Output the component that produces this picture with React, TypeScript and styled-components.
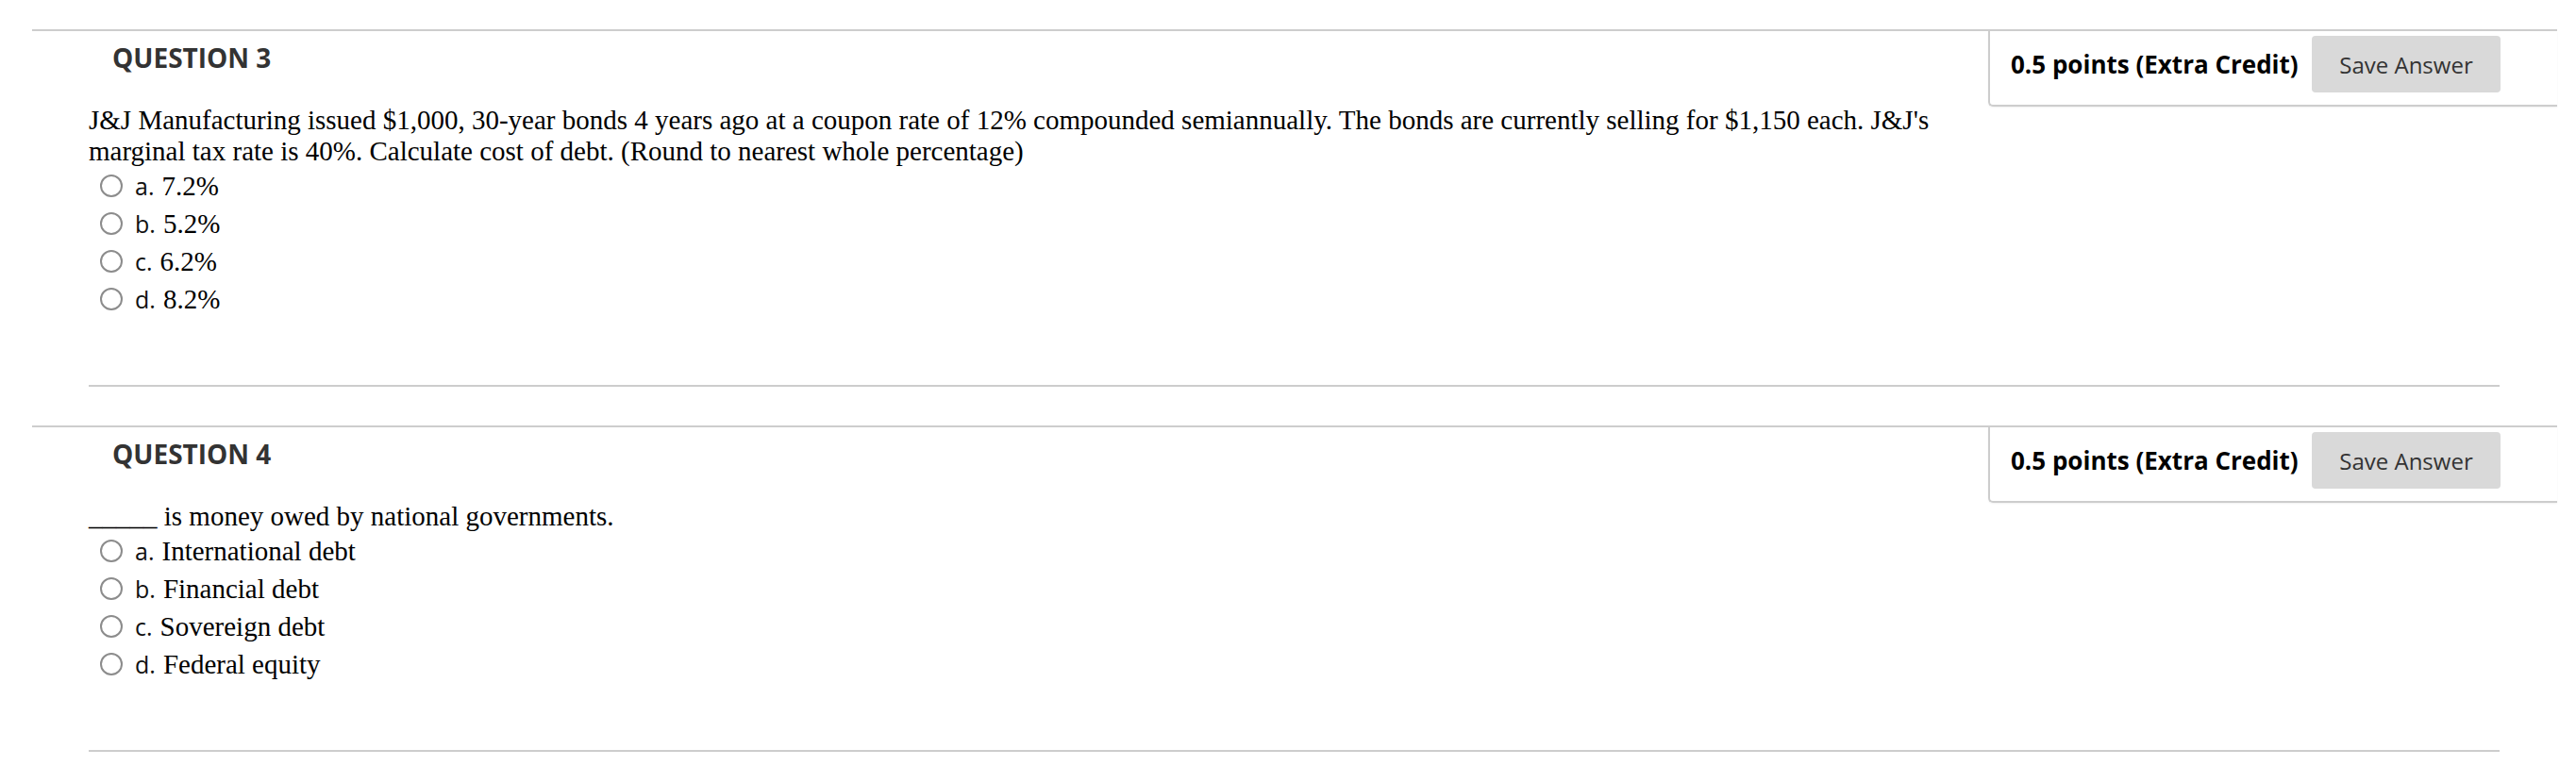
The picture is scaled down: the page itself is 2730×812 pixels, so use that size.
import styled, { createGlobalStyle } from 'styled-components'

interface Question {
  number: number
  points: string
  prompt: string
  options: { key: string; text: string }[]
}

const questions: Question[] = [
  {
    number: 3,
    points: '0.5 points (Extra Credit)',
    prompt:
      "J&J Manufacturing issued $1,000, 30-year bonds 4 years ago at a coupon rate of 12% compounded semiannually. The bonds are currently selling for $1,150 each. J&J's marginal tax rate is 40%. Calculate cost of debt. (Round to nearest whole percentage)",
    options: [
      { key: 'a.', text: '7.2%' },
      { key: 'b.', text: '5.2%' },
      { key: 'c.', text: '6.2%' },
      { key: 'd.', text: '8.2%' },
    ],
  },
  {
    number: 4,
    points: '0.5 points (Extra Credit)',
    prompt: '_____ is money owed by national governments.',
    options: [
      { key: 'a.', text: 'International debt' },
      { key: 'b.', text: 'Financial debt' },
      { key: 'c.', text: 'Sovereign debt' },
      { key: 'd.', text: 'Federal equity' },
    ],
  },
]

function App() {
  return (
    <>
      <GlobalStyle />
      <Page>
        <QuestionList>
          {questions.map((q) => (
            <QuestionItem key={q.number}>
              <PointsPanel>
                <Points>{q.points}</Points>
                <SaveButton type="button">Save Answer</SaveButton>
              </PointsPanel>
              <QuestionTitle>QUESTION {q.number}</QuestionTitle>
              <QuestionBody>
                <Prompt>{q.prompt}</Prompt>
                <OptionList>
                  {q.options.map((opt) => (
                    <Option key={opt.key}>
                      <Radio />
                      <OptionText>
                        <OptionKey>{opt.key}</OptionKey>
                        {opt.text}
                      </OptionText>
                    </Option>
                  ))}
                </OptionList>
              </QuestionBody>
              <Divider />
            </QuestionItem>
          ))}
        </QuestionList>
      </Page>
    </>
  )
}

const GlobalStyle = createGlobalStyle`
  body {
    margin: 0;
    background: #ffffff;
    font-family: 'Open Sans', 'Liberation Sans', sans-serif;
  }
  * {
    box-sizing: border-box;
  }
`

const Page = styled.div`
  padding: 31px 0 0 34px;
`

const QuestionList = styled.ol`
  list-style: none;
  margin: 0;
  padding: 0;
  width: 2676px;
`

const QuestionItem = styled.li`
  display: flow-root;
  border-top: 2px solid #cdcdcd;
  & + & {
    margin-top: 41px;
  }
`

const PointsPanel = styled.div`
  float: right;
  width: 603px;
  display: flex;
  align-items: center;
  justify-content: space-between;
  padding: 5px 60px 13px 22px;
  border-left: 2px solid #cdcdcd;
  border-bottom: 2px solid #cdcdcd;
  border-bottom-left-radius: 5px;
  box-shadow: 0 1px 2px rgba(0, 0, 0, 0.06);
`

const Points = styled.span`
  font-family: 'Open Sans', 'Liberation Sans', sans-serif;
  font-size: 26px;
  font-weight: 700;
  color: #000;
  white-space: nowrap;
`

const SaveButton = styled.button`
  flex-shrink: 0;
  width: 200px;
  height: 60px;
  border: none;
  border-radius: 4px;
  background: #d9d9d9;
  color: #333;
  font-family: 'Open Sans', 'Liberation Sans', sans-serif;
  font-size: 24px;
  padding: 0;
  cursor: pointer;
`

const QuestionTitle = styled.h3`
  margin: 9px 0 0 85px;
  font-family: 'Open Sans', 'Liberation Sans', sans-serif;
  font-size: 28px;
  line-height: 38px;
  font-weight: 700;
  color: #333;
`

const QuestionBody = styled.div`
  padding-left: 60px;
  margin-top: 31px;
`

const Prompt = styled.p`
  margin: 0;
  max-width: 2000px;
  font-family: 'Liberation Serif', 'Times New Roman', serif;
  font-size: 29px;
  line-height: 33px;
  color: #000;
`

const OptionList = styled.ul`
  list-style: none;
  margin: 0;
  padding: 0 0 0 12px;
`

const Option = styled.li`
  display: flex;
  align-items: center;
  height: 40px;
  gap: 13px;
`

const Radio = styled.span`
  width: 24px;
  height: 24px;
  border-radius: 50%;
  border: 2px solid #8c8c8c;
  background: #fff;
  flex-shrink: 0;
`

const OptionText = styled.span`
  font-family: 'Liberation Serif', 'Times New Roman', serif;
  font-size: 29px;
  line-height: 40px;
  color: #000;
  white-space: nowrap;
`

const OptionKey = styled.span`
  font-family: 'Open Sans', 'Liberation Sans', sans-serif;
  font-size: 25px;
  line-height: 1;
  color: #111;
  margin-right: 8px;
`

const Divider = styled.hr`
  margin: 71px 0 0 60px;
  width: 2555px;
  height: 2px;
  border: none;
  background: #cdcdcd;
`

export default App
